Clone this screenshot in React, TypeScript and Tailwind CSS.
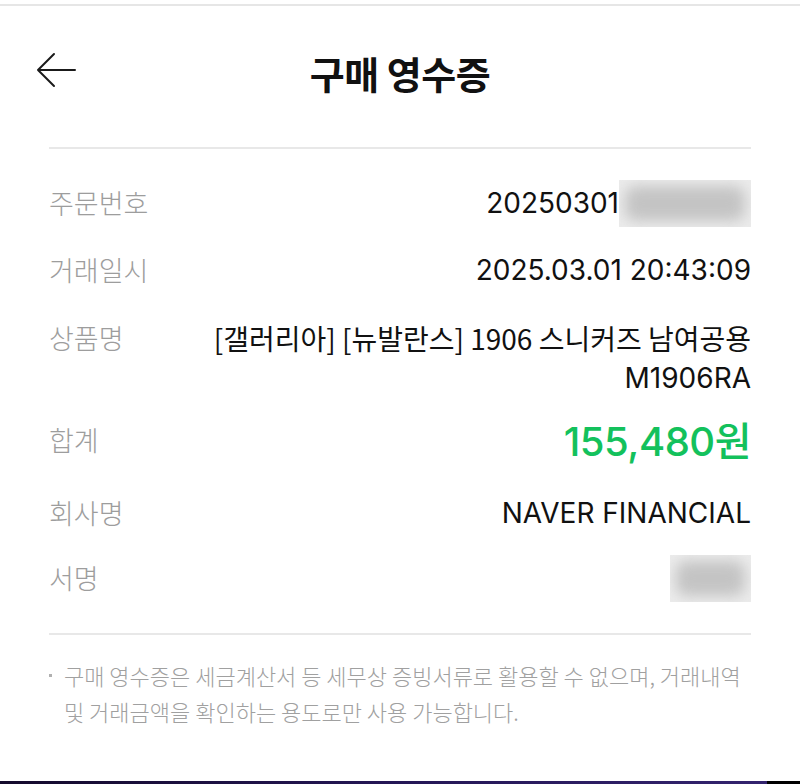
import React from 'react';

const KR = { fontFamily: '"Noto Sans CJK KR", "Noto Sans", sans-serif' };

function Blur({ className = '' }: { className?: string }) {
  return (
    <span className={`relative inline-block overflow-hidden bg-[#ececec] align-middle ${className}`}>
      <span className="absolute inset-[6px] rounded-[10px] bg-[#c4c4c4] blur-[7px]" />
    </span>
  );
}

function Row({
  label,
  children,
  className = 'h-[66px] items-center',
}: {
  label: string;
  children: React.ReactNode;
  className?: string;
}) {
  return (
    <div className={`flex ${className}`}>
      <div className="w-[150px] shrink-0 text-[27px] leading-[40px] text-[#9d9d9d] font-light" style={KR}>
        {label}
      </div>
      <div className="flex-1 flex flex-col items-end text-[28px] leading-[40px] text-[#111]">{children}</div>
    </div>
  );
}

export default function App() {
  return (
    <div
      className="w-[800px] h-[784px] bg-white flex flex-col overflow-hidden"
      style={{ fontFamily: '"Inter", "Noto Sans CJK KR", sans-serif' }}
    >
      <div className="pt-[4px]">
        <div className="h-[2px] bg-[#e6e6e6]" />
      </div>

      {/* header */}
      <div className="relative h-[134px] flex items-center justify-center">
        <button className="absolute left-[36px] top-[46px] w-[40px] h-[36px]" aria-label="back">
          <svg width="40" height="36" viewBox="0 0 40 36" fill="none" stroke="#1a1a1a" strokeWidth="2" strokeLinecap="round" strokeLinejoin="round">
            <path d="M39 18H2M18 2L2 18l16 16" />
          </svg>
        </button>
        <h1 className="text-[38px] leading-[48px] font-bold text-[#111] tracking-[-0.5px]" style={KR}>
          구매 영수증
        </h1>
      </div>

      <div className="mx-[49px] mt-[7px] h-[2px] bg-[#e8e8e8]" />

      {/* rows */}
      <div className="mx-[49px] pt-[21px] flex flex-col">
        <Row label="주문번호">
          <span className="flex items-center">
            <span>20250301</span>
            <Blur className="w-[132px] h-[47px]" />
          </span>
        </Row>
        <Row label="거래일시" className="h-[68px] items-center">
          <span>2025.03.01 20:43:09</span>
        </Row>
        <Row label="상품명" className="h-[104px] items-start pt-[14px]">
          <span style={KR}>[갤러리아] [뉴발란스] 1906 스니커즈 남여공용</span>
          <span>M1906RA</span>
        </Row>
        <div className="flex items-center h-[64px]">
          <div className="w-[150px] shrink-0 text-[27px] leading-[40px] text-[#9d9d9d] font-light" style={KR}>
            합계
          </div>
          <div className="flex-1 text-right text-[40px] leading-[48px] font-medium text-[#13c15c] tracking-[-0.5px]">
            155,480<span style={KR}>원</span>
          </div>
        </div>
        <Row label="회사명" className="h-[80px] items-center pt-[2px]">
          <span>NAVER FINANCIAL</span>
        </Row>
        <Row label="서명" className="h-[52px] items-center">
          <Blur className="w-[81px] h-[47px]" />
        </Row>
      </div>

      <div className="mx-[49px] mt-[29px] h-[2px] bg-[#e8e8e8]" />

      {/* note */}
      <div className="mx-[49px] pt-[22px] flex gap-[12px] text-[22px] leading-[36px] text-[#a0a0a0] font-light" style={KR}>
        <span className="shrink-0 mt-[17px] w-[3px] h-[3px] bg-[#b0b0b0]" />
        <p className="break-keep">
          구매 영수증은 세금계산서 등 세무상 증빙서류로 활용할 수 없으며, 거래내역 및 거래금액을 확인하는 용도로만 사용
          가능합니다.
        </p>
      </div>

      <div className="mt-auto h-[3px] flex">
        <div className="flex-1 bg-gradient-to-r from-[#140a2c] via-[#241655] to-[#33236e]" />
        <div className="w-[33px] bg-black" />
      </div>
    </div>
  );
}
